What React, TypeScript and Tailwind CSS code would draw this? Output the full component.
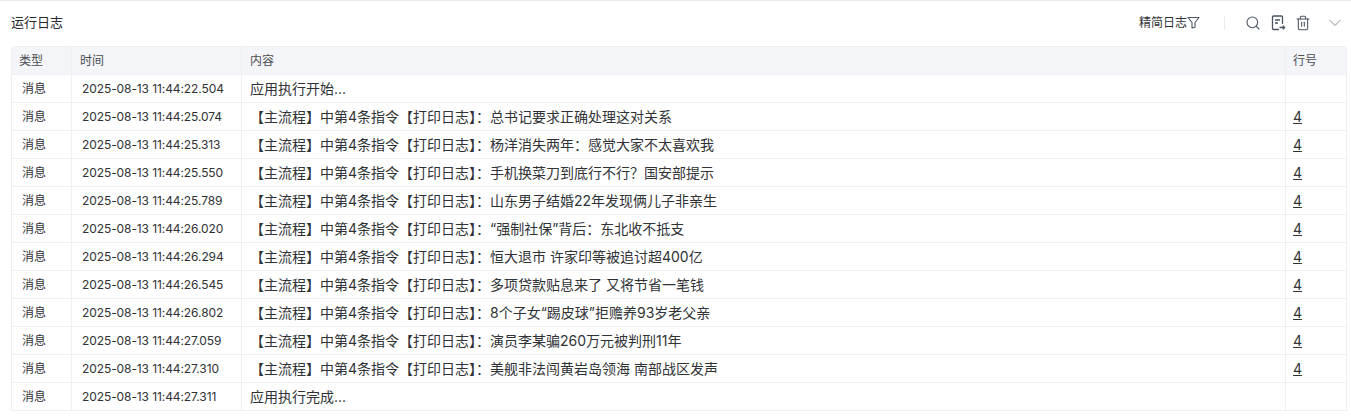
import { ChevronDown, Search, Trash2 } from 'lucide-react'

type LogRow = { time: string; text: string; line?: string }

const prefix = '【主流程】中第4条指令【打印日志】：'

const rows: LogRow[] = [
  { time: '2025-08-13 11:44:22.504', text: '应用执行开始...' },
  { time: '2025-08-13 11:44:25.074', text: prefix + '总书记要求正确处理这对关系', line: '4' },
  { time: '2025-08-13 11:44:25.313', text: prefix + '杨洋消失两年：感觉大家不太喜欢我', line: '4' },
  { time: '2025-08-13 11:44:25.550', text: prefix + '手机换菜刀到底行不行？国安部提示', line: '4' },
  { time: '2025-08-13 11:44:25.789', text: prefix + '山东男子结婚22年发现俩儿子非亲生', line: '4' },
  { time: '2025-08-13 11:44:26.020', text: prefix + '“强制社保”背后：东北收不抵支', line: '4' },
  { time: '2025-08-13 11:44:26.294', text: prefix + '恒大退市 许家印等被追讨超400亿', line: '4' },
  { time: '2025-08-13 11:44:26.545', text: prefix + '多项贷款贴息来了 又将节省一笔钱', line: '4' },
  { time: '2025-08-13 11:44:26.802', text: prefix + '8个子女“踢皮球”拒赡养93岁老父亲', line: '4' },
  { time: '2025-08-13 11:44:27.059', text: prefix + '演员李某骗260万元被判刑11年', line: '4' },
  { time: '2025-08-13 11:44:27.310', text: prefix + '美舰非法闯黄岩岛领海 南部战区发声', line: '4' },
  { time: '2025-08-13 11:44:27.311', text: '应用执行完成...' },
]

function ExportIcon() {
  return (
    <svg width="16" height="16" viewBox="0 0 16 16" fill="none" stroke="#4b5563" strokeWidth="1.3">
      <path d="M9 14.5H3.5a1 1 0 0 1-1-1V2a1 1 0 0 1 1-1h8a1 1 0 0 1 1 1v7" />
      <path d="M5 5h5M5 8h3" />
      <path d="M9.5 12.5h5M12.8 10.8l1.8 1.7-1.8 1.7" />
    </svg>
  )
}

export default function App() {
  return (
    <div className="w-[1351px] h-[417px] overflow-hidden bg-white border-t border-[#e8eaef] font-['Inter','Noto_Sans_CJK_SC',sans-serif] text-xs text-[#303236]">
      <div className="flex items-center justify-between h-[45px] pb-[2px] pl-[11px] pr-[6px]">
        <span className="text-[13px] text-[#26282c]">运行日志</span>
        <div className="flex items-center">
          <span className="text-xs">精简日志</span>
          <svg width="13" height="13" viewBox="0 0 13 13" fill="none" stroke="#4b5563" strokeWidth="1.1">
            <path d="M1 1.5h11L8 6.5v4.8L5 12V6.5z" strokeLinejoin="round" />
          </svg>
          <div className="w-px h-3.5 bg-[#e8eaef] ml-[24px] mr-[20px]" />
          <div className="flex items-center gap-[9px] text-[#4b5563]">
            <Search size={16} strokeWidth={1.6} />
            <ExportIcon />
            <Trash2 size={16} strokeWidth={1.6} />
          </div>
          <ChevronDown size={20} strokeWidth={1.2} className="ml-[14px] text-[#8a8f99]" />
        </div>
      </div>
      <div className="ml-[11px] w-[1336px] border-x border-t border-[#eeeff2] rounded-t">
        <div className="flex h-[28px] items-center bg-[#f4f5f8] text-[#4a4d52] border-b border-[#eeeff2] rounded-t">
          <div className="w-[60px] h-full flex items-center pl-[7px] border-r border-[#eeeff2]">类型</div>
          <div className="w-[170px] h-full flex items-center pl-[8px] border-r border-[#eeeff2]">时间</div>
          <div className="flex-1 h-full flex items-center pl-[8px] border-r border-[#eeeff2]">内容</div>
          <div className="w-[60px] h-full flex items-center pl-[7px]">行号</div>
        </div>
        {rows.map((row) => (
          <div key={row.time} className="flex h-[28px] items-center border-b border-[#eeeff2]">
            <div className="w-[60px] h-full flex items-center pl-[10px] border-r border-[#eeeff2]">消息</div>
            <div className="w-[170px] h-full flex items-center pl-[10px] tracking-[-0.09px] border-r border-[#eeeff2]">{row.time}</div>
            <div className="flex-1 h-full flex items-center pl-[8px] text-sm border-r border-[#eeeff2]">{row.text}</div>
            <div className="w-[60px] h-full flex items-center pl-[7px] text-sm underline">{row.line}</div>
          </div>
        ))}
      </div>
    </div>
  )
}
